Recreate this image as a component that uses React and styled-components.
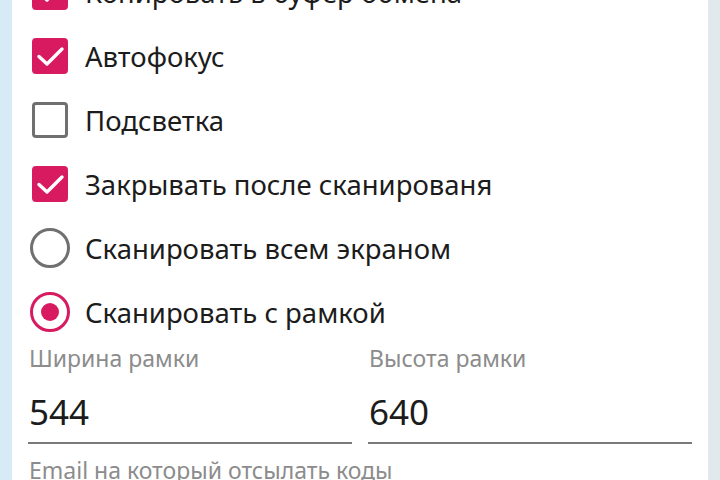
import React from 'react'
import styled, { createGlobalStyle } from 'styled-components'

const Global = createGlobalStyle`
  html, body {
    margin: 0;
    padding: 0;
    height: 100%;
    overflow: hidden;
    background: #dbecf4;
  }
  #root { height: 100%; }
`

const Screen = styled.div`
  height: 480px;
  display: flex;
  background: linear-gradient(90deg, #d7ebf6 0px, #d7ebf6 12px, #ffffff 12px, #ffffff 708px, #e1e9ec 708px);
  overflow: hidden;
`

const Panel = styled.div`
  margin: 0 12px;
  flex: 1;
  background: #fff;
  padding: 0 16px;
  font-family: "Noto Sans", "DejaVu Sans", sans-serif;
`

const List = styled.div`
  margin-top: -40px;
  display: flex;
  flex-direction: column;
`

const Row = styled.label`
  height: 64px;
  display: flex;
  align-items: center;
  gap: 13px;
  font-size: 27.5px;
  color: #1c1c1c;
`

const Control = styled.span`
  width: 44px;
  height: 44px;
  display: flex;
  align-items: center;
  justify-content: center;
  flex-shrink: 0;
`

const Box = styled.span`
  width: 36px;
  height: 36px;
  box-sizing: border-box;
  border-radius: 4px;
  display: flex;
  background: ${p => (p.$on ? '#d81b60' : 'transparent')};
  border: ${p => (p.$on ? 'none' : '3.5px solid #707070')};
`

const Ring = styled.span`
  width: 40px;
  height: 40px;
  box-sizing: border-box;
  border-radius: 50%;
  border: 3.5px solid ${p => (p.$on ? '#d81b60' : '#707070')};
  display: flex;
  align-items: center;
  justify-content: center;
`

const Dot = styled.span`
  width: 18px;
  height: 18px;
  border-radius: 50%;
  background: #d81b60;
`

const Fields = styled.div`
  display: grid;
  grid-template-columns: 1fr 1fr;
  column-gap: 16px;
`

const Field = styled.div`
  display: flex;
  flex-direction: column;
`

const Caption = styled.div`
  font-size: 23px;
  line-height: 28px;
  color: #8c8c8c;
  padding-left: 1px;
`

const Value = styled.div`
  font-size: 35px;
  line-height: 44px;
  color: #1c1c1c;
  padding: 18px 0 8px 1px;
  border-bottom: 2px solid #7a7a7a;
`

const Email = styled(Caption)`
  margin-top: 12px;
`

const Tick = () => (
  <svg width="36" height="36" viewBox="0 0 36 36" fill="none">
    <path d="M7 18.5l8 7.5L30 11" stroke="#fff" strokeWidth="3.4" strokeLinecap="round" strokeLinejoin="round" />
  </svg>
)

function Check({ on, children }) {
  return (
    <Row>
      <Control>
        <Box $on={on}>{on && <Tick />}</Box>
      </Control>
      {children}
    </Row>
  )
}

function Radio({ on, children }) {
  return (
    <Row>
      <Control>
        <Ring $on={on}>{on && <Dot />}</Ring>
      </Control>
      {children}
    </Row>
  )
}

export default function App() {
  return (
    <>
      <Global />
      <Screen>
        <Panel>
          <List>
            <Check on>Копировать в буфер обмена</Check>
            <Check on>Автофокус</Check>
            <Check>Подсветка</Check>
            <Check on>Закрывать после сканированя</Check>
            <Radio>Сканировать всем экраном</Radio>
            <Radio on>Сканировать с рамкой</Radio>
          </List>
          <Fields>
            <Field>
              <Caption>Ширина рамки</Caption>
              <Value>544</Value>
            </Field>
            <Field>
              <Caption>Высота рамки</Caption>
              <Value>640</Value>
            </Field>
          </Fields>
          <Email>Email на который отсылать коды</Email>
        </Panel>
      </Screen>
    </>
  )
}
